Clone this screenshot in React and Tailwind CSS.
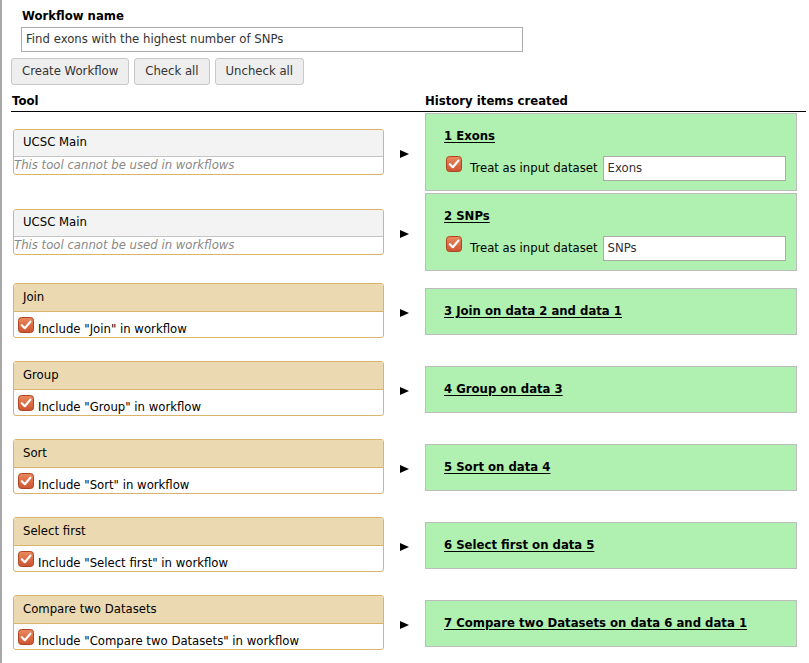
import React from 'react';

const rows = [
  { tool: 'UCSC Main', usable: false, hist: '1 Exons', input: 'Exons' },
  { tool: 'UCSC Main', usable: false, hist: '2 SNPs', input: 'SNPs' },
  { tool: 'Join', usable: true, hist: '3 Join on data 2 and data 1' },
  { tool: 'Group', usable: true, hist: '4 Group on data 3' },
  { tool: 'Sort', usable: true, hist: '5 Sort on data 4' },
  { tool: 'Select first', usable: true, hist: '6 Select first on data 5' },
  { tool: 'Compare two Datasets', usable: true, hist: '7 Compare two Datasets on data 6 and data 1' },
];

// GTK-style orange checkbox
const Checkbox = ({ className = '' }) => (
  <svg width="16" height="16" viewBox="0 0 16 16" className={`shrink-0 ${className}`}>
    <defs>
      <linearGradient id="cbg" x1="0" y1="0" x2="0" y2="1">
        <stop offset="0" stopColor="#ea8a5e" />
        <stop offset="1" stopColor="#cc5430" />
      </linearGradient>
    </defs>
    <rect x="0.5" y="0.5" width="15" height="15" rx="3" fill="url(#cbg)" stroke="#ad4522" />
    <path d="M3.8 8.2 L6.8 11.2 L12.4 4.6" fill="none" stroke="#fff" strokeWidth="2.2" strokeLinecap="round" strokeLinejoin="round" />
  </svg>
);

const Arrow = () => (
  <svg width="9" height="8" viewBox="0 0 9 8" className="mt-[4px]">
    <polygon points="0,0 9,4 0,8" fill="#000" />
  </svg>
);

function ToolBox({ row }) {
  if (!row.usable) {
    return (
      <div className="ml-[2px] mt-[10px] mb-[11px] w-[371px] rounded-[3px] border border-[#d8b46c] bg-white">
        <div className="flex h-[27px] items-center rounded-t-[3px] border-b border-[#c4c4c4] bg-[#f3f3f3] pl-[9px] leading-[15px]">
          {row.tool}
        </div>
        <div className="h-[17px] italic leading-[17px] text-[#888]">This tool cannot be used in workflows</div>
      </div>
    );
  }
  return (
    <div className="ml-[2px] mt-[10px] mb-[11px] w-[371px] rounded-[3px] border border-[#d8b46c] bg-white">
      <div className="flex h-[28px] items-center rounded-t-[3px] border-b border-[#d8b46c] bg-[#ebd9b2] pl-[9px] leading-[15px]">
        {row.tool}
      </div>
      <div className="flex h-[25px] items-end pl-[4px]">
        <Checkbox className="mb-[4px]" />
        <span className="ml-[4px] leading-[15px]">Include "{row.tool}" in workflow</span>
      </div>
    </div>
  );
}

function HistoryBox({ row }) {
  return (
    <div className={`w-[372px] border border-[#bcbcbc] bg-[#b0f0b0] pl-[18px] pt-[15px] ${row.input ? 'pb-[9px]' : 'pb-[15px]'}`}>
      <div className="font-bold leading-[15px] underline underline-offset-2">{row.hist}</div>
      {row.input && (
        <div className="mt-[12px] flex items-center">
          <Checkbox className="ml-[2px] self-start" />
          <span className="ml-[8px] leading-[15px]">Treat as input dataset</span>
          <div className="ml-[5px] flex h-[25px] w-[183px] items-center border border-[#aaa] bg-white pl-[4px] text-[#333]">
            {row.input}
          </div>
        </div>
      )}
    </div>
  );
}

export default function App() {
  return (
    <div className="min-h-[663px] w-[809px] border-l-2 border-[#a8a8a8] bg-white pt-[9px] font-['DejaVu_Sans',Verdana,sans-serif] text-[11.7px] text-black">
      <div className="pl-[20px] font-bold leading-[15px]">Workflow name</div>
      <div className="ml-[19px] mt-[3px] flex h-[25px] w-[502px] items-center border border-[#aaa] bg-white pl-[4px] text-[#333]">
        Find exons with the highest number of SNPs
      </div>
      <div className="ml-[9px] mt-[6px] flex gap-[5px]">
        {['Create Workflow', 'Check all', 'Uncheck all'].map((b) => (
          <button key={b} className="h-[27px] rounded-[3px] border border-[#c8c8c8] bg-[#eeeeee] px-[10px] text-[#333]">
            {b}
          </button>
        ))}
      </div>

      <div className="ml-[9px] w-[795px]">
        <div className="mt-[9px] flex border-b border-black pb-[2px] font-bold leading-[15px]">
          <div className="w-[414px] pl-[1px]">Tool</div>
          <div>History items created</div>
        </div>
        {rows.map((row, i) => (
          <div key={i} className="flex items-center py-[1px]">
            <div className="w-[380px]">
              <ToolBox row={row} />
            </div>
            <div className="flex w-[34px] pl-[9px]">
              <Arrow />
            </div>
            <HistoryBox row={row} />
          </div>
        ))}
      </div>
    </div>
  );
}
